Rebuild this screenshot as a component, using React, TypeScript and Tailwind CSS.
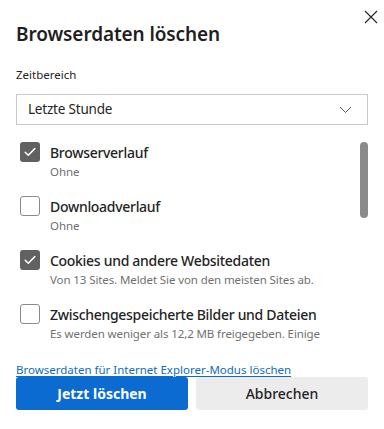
import React from 'react';

const items = [
  { label: 'Browserverlauf', sub: 'Ohne', checked: true },
  { label: 'Downloadverlauf', sub: 'Ohne', checked: false },
  { label: 'Cookies und andere Websitedaten', sub: 'Von 13 Sites. Meldet Sie von den meisten Sites ab.', checked: true },
  { label: 'Zwischengespeicherte Bilder und Dateien', sub: 'Es werden weniger als 12,2 MB freigegeben. Einige', checked: false },
];

const CheckBox: React.FC<{ checked: boolean }> = ({ checked }) =>
  checked ? (
    <div className="w-5 h-5 rounded-[3px] bg-[#616161] flex items-center justify-center shrink-0">
      <svg width="12" height="10" viewBox="0 0 12 10" fill="none">
        <path d="M1.2 5.2 L4.3 8.2 L10.8 1.6" stroke="white" strokeWidth="1.5" strokeLinecap="round" strokeLinejoin="round" />
      </svg>
    </div>
  ) : (
    <div className="w-5 h-5 rounded-[3px] border border-[#8a8a8a] bg-white shrink-0" />
  );

const App: React.FC = () => {
  return (
    <div
      className="w-[384px] h-[429px] bg-white relative overflow-hidden text-[#1f1f1f]"
      style={{ fontFamily: '"Noto Sans", "Open Sans", sans-serif' }}
    >
      <button className="absolute top-[9px] right-[5px] w-4 h-4 flex items-center justify-center">
        <svg width="14" height="14" viewBox="0 0 14 14">
          <path d="M1 1 L13 13 M13 1 L1 13" stroke="#222" strokeWidth="1.1" />
        </svg>
      </button>

      <div className="px-4 pt-[21px]">
        <h1 className="text-[19px] leading-[26px] font-semibold tracking-[-0.1px]">Browserdaten löschen</h1>

        <div className="mt-[20px] text-[11.5px] leading-[16px] text-[#242424]">Zeitbereich</div>

        <div className="mt-[11px] h-[31px] border border-[#c8c8c8] flex items-center justify-between pl-[11px] pr-[15px]">
          <span className="text-[13.5px] tracking-[-0.2px] text-[#242424]">Letzte Stunde</span>
          <svg width="13" height="8" viewBox="0 0 13 8">
            <path d="M1 1 L6.5 6.5 L12 1" stroke="#555" strokeWidth="1" fill="none" />
          </svg>
        </div>
      </div>

      <div className="relative mt-[12px] h-[204px] overflow-hidden">
        <div className="flex flex-col pl-5 pr-10 pt-[5px]">
          {items.map((it) => (
            <div key={it.label} className="flex items-start gap-[10px] h-[54px]">
              <CheckBox checked={it.checked} />
              <div className="flex flex-col -mt-[1px]">
                <span className="text-[14px] leading-[23px] font-medium tracking-[-0.3px] text-[#242424] whitespace-nowrap">{it.label}</span>
                <span className="text-[11.5px] leading-[16px] tracking-[-0.1px] text-[#707070] whitespace-nowrap">{it.sub}</span>
              </div>
            </div>
          ))}
        </div>
        <div className="absolute right-4 top-[5px] w-2 h-[76px] rounded-full bg-[#8a8a8a]" />
      </div>

      <div className="px-4 mt-[22px]">
        <a href="#" className="block text-[11.5px] leading-[14px] text-[#0f6cbd] underline underline-offset-2 w-fit">
          Browserdaten für Internet Explorer-Modus löschen
        </a>
        <div className="grid grid-cols-2 gap-2">
          <button className="h-[33px] rounded-[3px] bg-[#0c6bd0] text-white text-[14px] font-bold">Jetzt löschen</button>
          <button className="h-[33px] rounded-[3px] bg-[#ececec] text-[#242424] text-[14px] font-medium">Abbrechen</button>
        </div>
      </div>
    </div>
  );
};

export default App;
